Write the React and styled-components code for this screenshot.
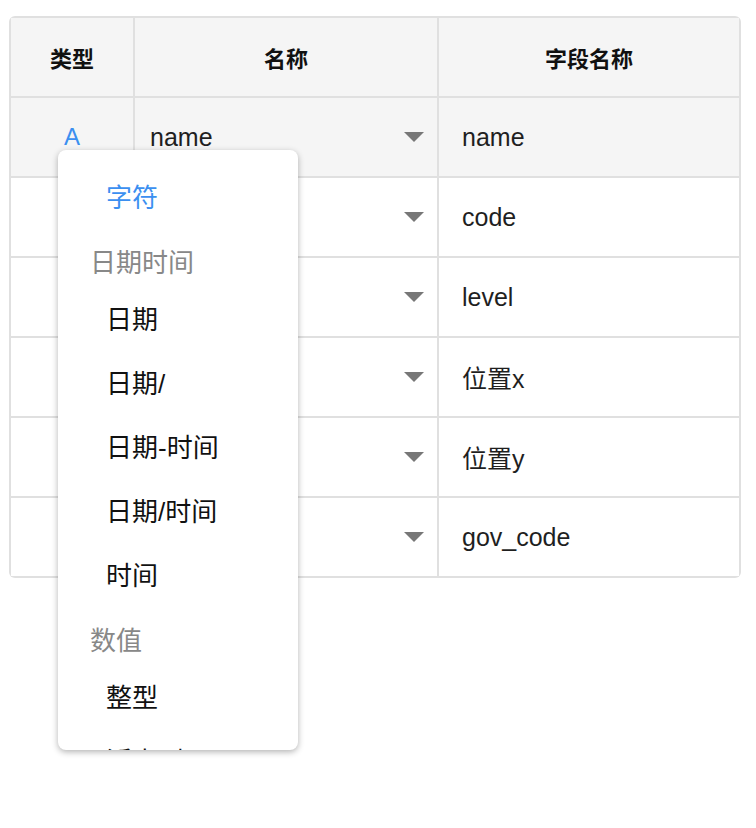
import React from "react"
import styled, { createGlobalStyle } from "styled-components"

const GlobalStyle = createGlobalStyle`
  body {
    margin: 0;
    background: #fff;
    font-family: "Liberation Sans", "Noto Sans CJK SC", sans-serif;
    color: #1f1f1f;
  }
`

const rows = [
  { type: "A", name: "name", field: "name" },
  { type: "A", name: "code", field: "code" },
  { type: "A", name: "level", field: "level" },
  { type: "A", name: "x", field: "位置x" },
  { type: "A", name: "y", field: "位置y" },
  { type: "A", name: "gov_code", field: "gov_code" },
]

const menu = [
  { label: "字符", active: true },
  { group: "日期时间" },
  { label: "日期" },
  { label: "日期/" },
  { label: "日期-时间" },
  { label: "日期/时间" },
  { label: "时间" },
  { group: "数值" },
  { label: "整型" },
  { label: "浮点型" },
]

export default function App() {
  return (
    <Page>
      <GlobalStyle />
      <Wrap>
        <Grid>
          <Head>类型</Head>
          <Head>名称</Head>
          <Head>字段名称</Head>
          {rows.map((r, i) => (
            <React.Fragment key={r.field}>
              <TypeCell $shade={i === 0}>{i === 0 ? r.type : ""}</TypeCell>
              <SelectCell $shade={i === 0}>
                <span>{r.name}</span>
                <Caret />
              </SelectCell>
              <Cell $shade={i === 0}>{r.field}</Cell>
            </React.Fragment>
          ))}
        </Grid>
        <Menu>
          {menu.map((m, i) =>
            m.group ? (
              <GroupLabel key={i}>{m.group}</GroupLabel>
            ) : (
              <Item key={i} $active={m.active}>
                {m.label}
              </Item>
            )
          )}
        </Menu>
      </Wrap>
    </Page>
  )
}

const Page = styled.div`
  padding: 16px 15px 0 9px;
  height: 828px;
  box-sizing: border-box;
`

const Wrap = styled.div`
  position: relative;
  width: 732px;
`

const Grid = styled.div`
  display: grid;
  grid-template-columns: 122px 302px 300px;
  grid-auto-rows: 78px;
  gap: 2px;
  padding: 2px;
  background: #e0e0e0;
  border-radius: 6px;
  overflow: hidden;
`

const Head = styled.div`
  background: #f5f5f5;
  display: flex;
  align-items: center;
  justify-content: center;
  font-size: 22px;
  font-weight: bold;
  color: #111;
`

const Cell = styled.div`
  background: ${(p) => (p.$shade ? "#f5f5f5" : "#fff")};
  display: flex;
  align-items: center;
  padding-left: 23px;
  font-size: 25px;
`

const TypeCell = styled(Cell)`
  padding-left: 0;
  justify-content: center;
  color: #3b8ff0;
  font-size: 24px;
`

const SelectCell = styled(Cell)`
  padding: 0 13px 0 15px;
  justify-content: space-between;
`

const Caret = styled.i`
  width: 0;
  height: 0;
  border-left: 10px solid transparent;
  border-right: 10px solid transparent;
  border-top: 10px solid #777;
`

const Menu = styled.div`
  position: absolute;
  left: 49px;
  top: 134px;
  width: 240px;
  height: 600px;
  box-sizing: border-box;
  padding-top: 16px;
  background: #fff;
  border-radius: 8px;
  box-shadow: 0 2px 6px rgba(0, 0, 0, 0.3);
  overflow: hidden;
`

const Item = styled.div`
  height: 64px;
  line-height: 64px;
  padding-left: 48px;
  font-size: 26px;
  color: ${(p) => (p.$active ? "#3b8ff0" : "#111")};
`

const GroupLabel = styled.div`
  height: 58px;
  box-sizing: border-box;
  padding: 8px 0 0 32px;
  line-height: 50px;
  font-size: 26px;
  color: #888;
`
